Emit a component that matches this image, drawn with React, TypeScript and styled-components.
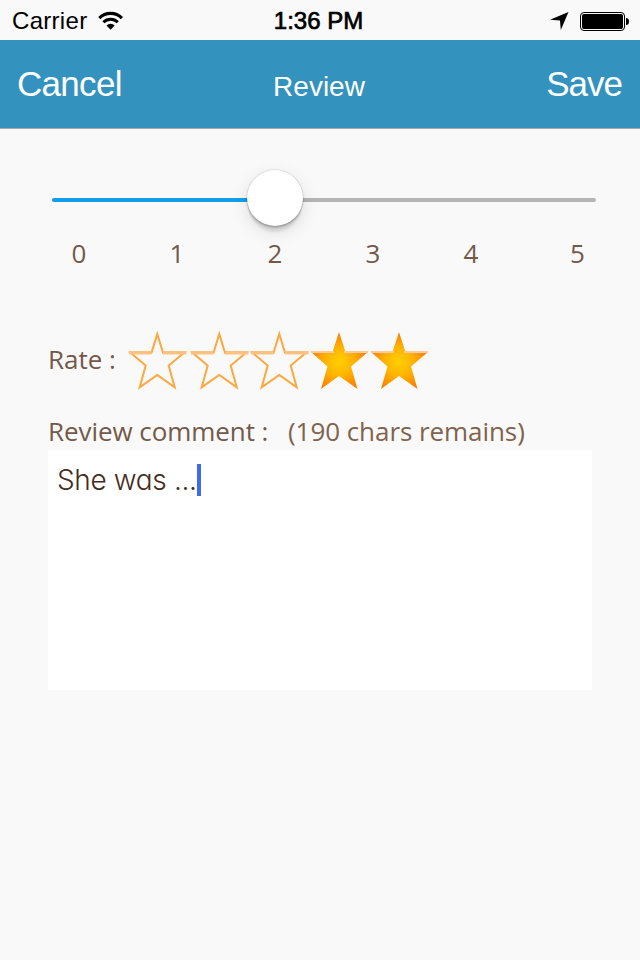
import React from "react";
import styled, { createGlobalStyle } from "styled-components";

const Global = createGlobalStyle`
  * { box-sizing: border-box; }
  body { margin: 0; background: #f9f9f9; }
`;

const Screen = styled.div`
  width: 640px;
  height: 960px;
  background: #f9f9f9;
  overflow: hidden;
  font-family: "Liberation Sans", Arial, sans-serif;
`;

const StatusBar = styled.header`
  height: 40px;
  display: grid;
  grid-template-columns: 1fr auto 1fr;
  align-items: center;
  padding: 0 11px 0 12px;
  color: #000;
`;

const StatusGroup = styled.div<{ $end?: boolean }>`
  display: flex;
  align-items: center;
  justify-content: ${(p) => (p.$end ? "flex-end" : "flex-start")};
  gap: 11px;
`;

const Carrier = styled.span`
  font-size: 24px;
  line-height: 40px;
  letter-spacing: 0.3px;
  padding-top: 1px;
`;

const Clock = styled.span`
  font-size: 24px;
  line-height: 40px;
  -webkit-text-stroke: 0.7px #000;
  padding: 1px 4px 0 0;
`;

const NavBar = styled.nav`
  height: 89px;
  display: grid;
  grid-template-columns: 1fr auto 1fr;
  align-items: center;
  padding: 0 18px 0 17px;
  background: #3492be;
  border-bottom: 1px solid #a5a7a8;
  color: #fff;
`;

const NavButton = styled.button<{ $end?: boolean }>`
  border: 0;
  padding: 0;
  background: none;
  color: inherit;
  font: 35px/44px "Liberation Sans", Arial, sans-serif;
  letter-spacing: ${(p) => (p.$end ? "-1px" : "-0.7px")};
  justify-self: ${(p) => (p.$end ? "end" : "start")};
`;

const NavTitle = styled.h1`
  margin: 0;
  font-size: 28px;
  line-height: 44px;
  font-weight: 400;
  padding: 6px 1px 0 0;
`;

const Content = styled.main`
  padding: 41px 44px 0 48px;
  font-family: "Open Sans", "Noto Sans", sans-serif;
  color: #735949;
  font-size: 26px;
  line-height: 36px;
`;

const Slider = styled.div`
  display: flex;
  align-items: center;
  height: 56px;
  padding-left: 4px;
`;

const Track = styled.div<{ $width: number; $active?: boolean }>`
  width: ${(p) => p.$width}px;
  height: 4px;
  margin-top: 4px;
  border-radius: ${(p) => (p.$active ? "2px 0 0 2px" : "0 2px 2px 0")};
  background: ${(p) => (p.$active ? "#149ce9" : "#b5b5b5")};
`;

const Thumb = styled.div`
  width: 56px;
  height: 56px;
  flex: none;
  margin: 0 -1px;
  border-radius: 50%;
  background: #fff;
  z-index: 1;
  box-shadow: 0 0 1px 0.5px rgba(0, 0, 0, 0.14), 0 2px 2px rgba(0, 0, 0, 0.2),
    0 7px 2px -1px rgba(0, 0, 0, 0.08), 0 6px 18px rgba(0, 0, 0, 0.12);
`;

const Scale = styled.div`
  display: grid;
  grid-template-columns: 62px 134px 62px 134px 62px 1fr;
  height: 36px;
  margin-top: 9px;
  text-align: center;
  & > span:last-child { padding-left: 68px; text-align: left; }
`;

const RateRow = styled.div`
  display: flex;
  align-items: center;
  height: 62px;
  margin-top: 58px;
`;

const RateLabel = styled.span`
  width: 79px;
  padding-bottom: 2px;
`;

const Star = styled.svg<{ $gap?: number }>`
  display: block;
  flex: none;
  margin-right: ${(p) => p.$gap ?? 0}px;
`;

const CommentHead = styled.div`
  display: flex;
  height: 36px;
  margin: 22px 0 1px;
`;

const CommentLabel = styled.label`
  width: 240px;
  letter-spacing: -0.06px;
`;

const Remaining = styled.span`
  color: #80634c;
  letter-spacing: -0.06px;
`;

const Editor = styled.div`
  display: flex;
  width: 544px;
  height: 240px;
  padding: 14px 9px;
  background: #fff;
  color: #452c1b;
  font-family: Inter, sans-serif;
  font-weight: 300;
  font-feature-settings: "cv11";
  font-size: 28px;
  line-height: 32px;
  letter-spacing: -0.36px;
`;

const Caret = styled.span`
  width: 4px;
  height: 32px;
  background: #4169f0;
`;

const OUTLINE = "M30.3 4 L36 22.8 H57 L41.7 35.5 L47.7 57.3 L30.3 45 L12.7 57.3 L18.7 35.5 L3.6 22.8 H24.5 Z";
const SOLID = "M30 2 L36.5 22 H59 L42 36.5 L48.5 59 L30 46 L12 59 L18.5 36.5 L2 22 H23.5 Z";

const RatingStar = ({ filled, gap }: { filled: boolean; gap?: number }) => (
  <Star width="60" height="60" viewBox="0 0 60 60" $gap={gap}>
    <defs>
      <radialGradient id="gold" gradientUnits="userSpaceOnUse" cx="30" cy="32" r="32">
        <stop offset="0" stopColor="#ffd000" />
        <stop offset="0.45" stopColor="#ffb300" />
        <stop offset="1" stopColor="#ff7400" />
      </radialGradient>
    </defs>
    {filled ? (
      <>
        <path d={SOLID} fill="url(#gold)" />
        <path d="M2 22 H25 M35 22 H59" stroke="#ffc9a0" strokeWidth="2" />
      </>
    ) : (
      <>
        <path d={OUTLINE} fill="none" stroke="#ffa63c" strokeWidth="2" />
        <path d="M2 22.8 H24.5 M36 22.8 H59.5" stroke="#ffc180" strokeWidth="3.4" />
      </>
    )}
  </Star>
);

const stars = [
  { filled: false, gap: 2 },
  { filled: false },
  { filled: false },
  { filled: true },
  { filled: true },
];

export default function App() {
  return (
    <Screen>
      <Global />
      <StatusBar>
        <StatusGroup>
          <Carrier>Carrier</Carrier>
          <svg width="26" height="20" viewBox="0 0 26 20">
            <path d="M1.3 7.1 A16 16 0 0 1 23.9 7.1" fill="none" stroke="#000" strokeWidth="3.2" />
            <path d="M5.4 11.3 A10.2 10.2 0 0 1 19.8 11.3" fill="none" stroke="#000" strokeWidth="3" />
            <path d="M8.5 14.4 A6 6 0 0 1 16.7 14.4 L12.6 18.8 Z" />
          </svg>
        </StatusGroup>
        <Clock>1:36 PM</Clock>
        <StatusGroup $end>
          <svg width="19" height="18" viewBox="0 0 19 18">
            <path d="M18.5 0 L10.8 18 L10 8.5 L0 7.8 Z" />
          </svg>
          <svg width="49" height="20" viewBox="0 0 49 20">
            <rect x="0.5" y="1.5" width="44" height="18" rx="3.5" fill="none" stroke="#000" />
            <rect x="2" y="3" width="41" height="15" rx="2" />
            <path d="M46 7 Q49 7 49 10.5 Q49 14 46 14 Z" />
          </svg>
        </StatusGroup>
      </StatusBar>
      <NavBar>
        <NavButton>Cancel</NavButton>
        <NavTitle>Review</NavTitle>
        <NavButton $end>Save</NavButton>
      </NavBar>
      <Content>
        <Slider>
          <Track $width={196} $active />
          <Thumb />
          <Track $width={294} />
        </Slider>
        <Scale>
          {[0, 1, 2, 3, 4, 5].map((n) => (
            <span key={n}>{n}</span>
          ))}
        </Scale>
        <RateRow>
          <RateLabel>Rate :</RateLabel>
          {stars.map((s, i) => (
            <RatingStar key={i} filled={s.filled} gap={s.gap} />
          ))}
        </RateRow>
        <CommentHead>
          <CommentLabel>Review comment :</CommentLabel>
          <Remaining>(190 chars remains)</Remaining>
        </CommentHead>
        <Editor>
          <span>She was ...</span>
          <Caret />
        </Editor>
      </Content>
    </Screen>
  );
}
